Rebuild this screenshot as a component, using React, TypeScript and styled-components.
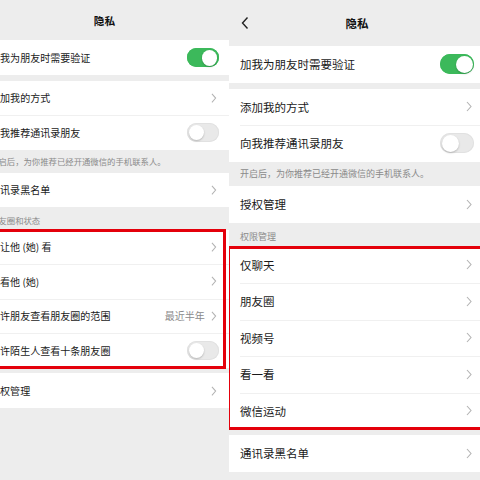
import React from "react";
import styled, { createGlobalStyle } from "styled-components";

const GlobalStyle = createGlobalStyle`
  html, body {
    margin: 0;
    padding: 0;
    background: #ededed;
  }
  body {
    font-family: "Noto Sans CJK SC", "Noto Sans", sans-serif;
    -webkit-font-smoothing: antialiased;
  }
`;

const Stage = styled.div`
  width: 480px;
  height: 480px;
  display: flex;
  overflow: hidden;
  background: #ededed;
`;

const Viewport = styled.div<{ $w: number }>`
  width: ${(p) => p.$w}px;
  height: 480px;
  flex-shrink: 0;
  overflow: hidden;
`;

const Screen = styled.div<{ $w: number; $zoom: number; $shift: number; $fs: number; $row: number }>`
  width: ${(p) => p.$w}px;
  margin-left: ${(p) => p.$shift}px;
  zoom: ${(p) => p.$zoom};
  --fs: ${(p) => p.$fs}px;
  --row: ${(p) => p.$row}px;
  min-height: 560px;
  background: #ededed;
  display: flex;
  flex-direction: column;
`;

const NavBar = styled.div<{ $h: number }>`
  height: ${(p) => p.$h}px;
  position: relative;
  display: flex;
  align-items: center;
  justify-content: center;
  font-size: 11.5px;
  font-weight: 600;
  color: #111;
`;

const BackButton = styled.span`
  position: absolute;
  left: 12px;
  top: 50%;
  transform: translateY(-50%);
  display: flex;
`;

const Group = styled.div<{ $gap: boolean }>`
  position: relative;
  background: #fff;
  margin-top: ${(p) => (p.$gap ? "6px" : "0")};
`;

const Row = styled.div`
  height: var(--row);
  padding: 0 11px;
  display: flex;
  align-items: center;
  position: relative;
  font-size: var(--fs);
  color: #1a1a1a;

  & + &::before {
    content: "";
    position: absolute;
    top: 0;
    left: 11px;
    right: 0;
    height: 1px;
    background: #f0f0f0;
  }
`;

const Label = styled.span`
  flex: 1;
  white-space: nowrap;
`;

const Value = styled.span`
  color: #8a8a8a;
  margin-right: 7px;
  white-space: nowrap;
`;

const Chevron = styled.svg`
  width: 6px;
  height: 11px;
  margin-right: 2px;
  flex-shrink: 0;
`;

const Switch = styled.span<{ $on: boolean }>`
  width: 34px;
  height: 20px;
  border-radius: 10px;
  flex-shrink: 0;
  position: relative;
  background: ${(p) => (p.$on ? "#3cb95b" : "#e9e9e9")};
  box-shadow: inset 0 0 0 1px ${(p) => (p.$on ? "#3cb95b" : "#e1e1e1")};

  &::after {
    content: "";
    position: absolute;
    top: 1.5px;
    left: ${(p) => (p.$on ? "15.5px" : "1.5px")};
    width: 17px;
    height: 17px;
    border-radius: 50%;
    background: #fff;
    box-shadow: 0 1px 2px rgba(0, 0, 0, 0.22);
  }
`;

const Note = styled.div`
  height: 24.5px;
  padding: 0 11px;
  display: flex;
  align-items: center;
  font-size: 9px;
  color: #8a8a8a;
  white-space: nowrap;
`;

const SectionTitle = styled.div`
  height: 24px;
  padding: 0 11px 4px;
  box-sizing: border-box;
  display: flex;
  align-items: flex-end;
  font-size: 9px;
  color: #8a8a8a;
  white-space: nowrap;
`;

const Highlight = styled.div<{ $l: number; $r: number }>`
  position: absolute;
  top: -1px;
  bottom: -1px;
  left: ${(p) => p.$l}px;
  right: ${(p) => p.$r}px;
  border: 3.5px solid #e4000b;
  pointer-events: none;
`;

type Item = { label: string; value?: string; toggle?: boolean };
type Block =
  | { kind: "group"; items: Item[]; gap?: boolean; mark?: boolean }
  | { kind: "note"; text: string }
  | { kind: "title"; text: string };

const NOTE = "开启后，为你推荐已经开通微信的手机联系人。";

const leftBlocks: Block[] = [
  { kind: "group", items: [{ label: "加我为朋友时需要验证", toggle: true }] },
  {
    kind: "group",
    gap: true,
    items: [{ label: "添加我的方式" }, { label: "向我推荐通讯录朋友", toggle: false }],
  },
  { kind: "note", text: NOTE },
  { kind: "group", items: [{ label: "通讯录黑名单" }] },
  { kind: "title", text: "朋友圈和状态" },
  {
    kind: "group",
    mark: true,
    items: [
      { label: "不让他 (她) 看" },
      { label: "不看他 (她)" },
      { label: "允许朋友查看朋友圈的范围", value: "最近半年" },
      { label: "允许陌生人查看十条朋友圈", toggle: false },
    ],
  },
  { kind: "group", gap: true, items: [{ label: "授权管理" }] },
];

const rightBlocks: Block[] = [
  { kind: "group", items: [{ label: "加我为朋友时需要验证", toggle: true }] },
  {
    kind: "group",
    gap: true,
    items: [{ label: "添加我的方式" }, { label: "向我推荐通讯录朋友", toggle: false }],
  },
  { kind: "note", text: NOTE },
  { kind: "group", items: [{ label: "授权管理" }] },
  { kind: "title", text: "权限管理" },
  {
    kind: "group",
    mark: true,
    items: [
      { label: "仅聊天" },
      { label: "朋友圈" },
      { label: "视频号" },
      { label: "看一看" },
      { label: "微信运动" },
    ],
  },
  { kind: "group", gap: true, items: [{ label: "通讯录黑名单" }] },
];

const ChevronIcon = () => (
  <Chevron viewBox="0 0 6 11">
    <path d="M1 1 L5 5.5 L1 10" fill="none" stroke="#b3b3b3" strokeWidth="1.1" />
  </Chevron>
);

const BackIcon = () => (
  <svg width="8" height="13" viewBox="0 0 8 13">
    <path d="M6.5 1 L1.5 6.5 L6.5 12" fill="none" stroke="#222" strokeWidth="1.4" />
  </svg>
);

type ScreenProps = {
  blocks: Block[];
  width: number;
  zoom: number;
  shift: number;
  fontSize: number;
  rowHeight: number;
  navHeight: number;
  mark: { l: number; r: number };
};

const PrivacyScreen = ({
  blocks,
  width,
  zoom,
  shift,
  fontSize,
  rowHeight,
  navHeight,
  mark,
}: ScreenProps) => (
  <Screen $w={width} $zoom={zoom} $shift={shift} $fs={fontSize} $row={rowHeight}>
    <NavBar $h={navHeight}>
      <BackButton>
        <BackIcon />
      </BackButton>
      隐私
    </NavBar>
    {blocks.map((b, i) => {
      if (b.kind === "note") return <Note key={i}>{b.text}</Note>;
      if (b.kind === "title") return <SectionTitle key={i}>{b.text}</SectionTitle>;
      return (
        <Group key={i} $gap={!!b.gap}>
          {b.items.map((it) => (
            <Row key={it.label}>
              <Label>{it.label}</Label>
              {it.value && <Value>{it.value}</Value>}
              {it.toggle === undefined ? <ChevronIcon /> : <Switch $on={it.toggle} />}
            </Row>
          ))}
          {b.mark && <Highlight $l={mark.l} $r={mark.r} />}
        </Group>
      );
    })}
  </Screen>
);

export default function App() {
  return (
    <>
      <GlobalStyle />
      <Stage>
        <Viewport $w={229}>
          <PrivacyScreen
            blocks={leftBlocks}
            width={268}
            zoom={0.93}
            shift={-21.7}
            fontSize={10.8}
            rowHeight={37.2}
            navHeight={43.5}
            mark={{ l: -30, r: 3 }}
          />
        </Viewport>
        <Viewport $w={251}>
          <PrivacyScreen
            blocks={rightBlocks}
            width={256}
            zoom={1}
            shift={0}
            fontSize={11.5}
            rowHeight={36.5}
            navHeight={46}
            mark={{ l: -2, r: -20 }}
          />
        </Viewport>
      </Stage>
    </>
  );
}
